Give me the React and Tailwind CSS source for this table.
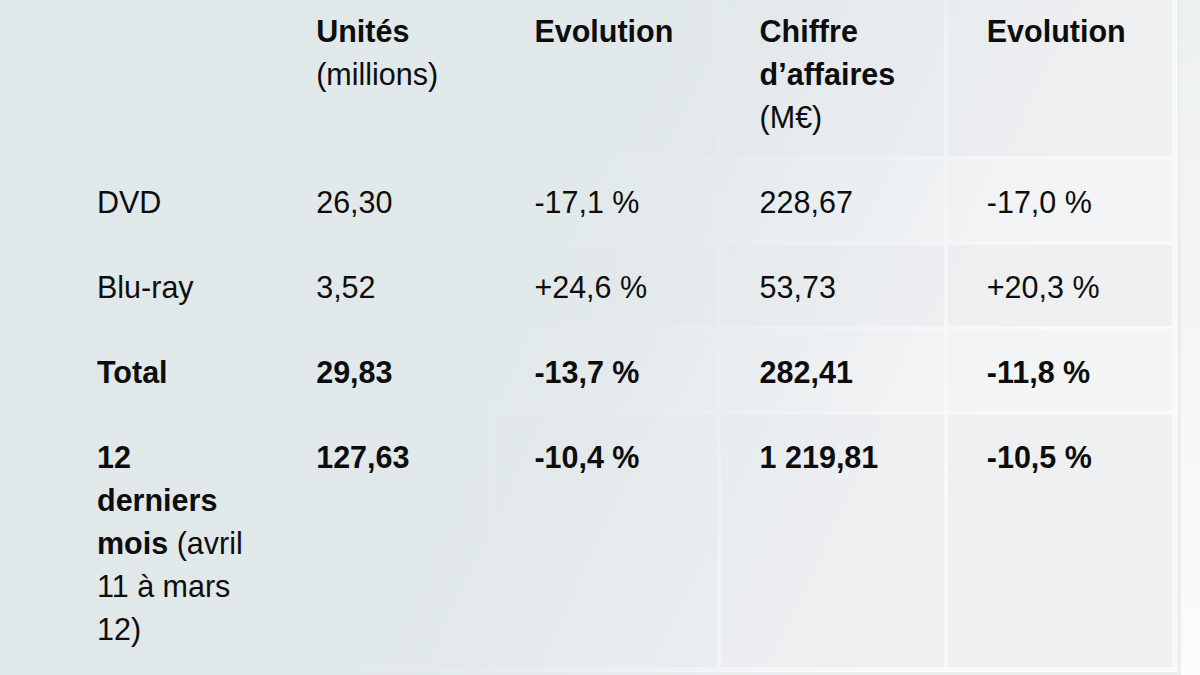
import React from "react";

const rows = [
  { label: "DVD", cells: ["26,30", "-17,1 %", "228,67", "-17,0 %"], bold: false, tone: "light" },
  { label: "Blu-ray", cells: ["3,52", "+24,6 %", "53,73", "+20,3 %"], bold: false, tone: "gray" },
  { label: "Total", cells: ["29,83", "-13,7 %", "282,41", "-11,8 %"], bold: true, tone: "light" },
];

function T({ children, className = "" }) {
  return <span className={"relative z-20 " + className}>{children}</span>;
}

export default function App() {
  const cellBase = "align-top text-left pl-[39px] pr-[10px] pt-[21px] pb-[17px]";
  return (
    <div className="relative w-[1200px] h-[675px] overflow-hidden bg-[linear-gradient(to_bottom,#edf0f1,#fbfcfc)] font-['Liberation_Sans',Arial,sans-serif] text-[30.5px] leading-[43px] text-[#0d0d0d]">
      <div className="ml-[54px] mt-[-4px] inline-block border-r-4 border-b-4 border-[#eceff0]">
        <div className="border-r border-b border-white">
          <table className="w-[1122px] table-fixed border-separate border-spacing-[4px] bg-[#f8f9fa]">
            <colgroup>
              <col className="w-[215px]" />
              <col className="w-[214px]" />
              <col className="w-[221px]" />
              <col className="w-[223px]" />
              <col className="w-[224px]" />
            </colgroup>
            <thead>
              <tr>
                <th className="align-top text-left pl-[39px] pt-[10px] pb-[17px] bg-[#eff0f2] font-normal"></th>
                <th className="align-top text-left pl-[39px] pt-[10px] pb-[17px] bg-[#eff0f2] font-normal">
                  <T className="font-bold">Unités</T>
                  <br />
                  <T>(millions)</T>
                </th>
                <th className="align-top text-left pl-[39px] pt-[10px] pb-[17px] bg-[#eff0f2] font-normal">
                  <T className="font-bold">Evolution</T>
                </th>
                <th className="align-top text-left pl-[39px] pt-[10px] pb-[17px] bg-[#eff0f2] font-normal">
                  <T className="font-bold">Chiffre</T>
                  <br />
                  <T className="font-bold">d’affaires</T>
                  <br />
                  <T>(M€)</T>
                </th>
                <th className="align-top text-left pl-[39px] pt-[10px] pb-[17px] bg-[#eff0f2] font-normal">
                  <T className="font-bold">Evolution</T>
                </th>
              </tr>
            </thead>
            <tbody>
              {rows.map((r) => (
                <tr key={r.label}>
                  <td className={cellBase + (r.tone === "gray" ? " bg-[#eff0f2]" : " bg-[#f4f5f6]")}>
                    <T className={r.bold ? "font-bold whitespace-nowrap" : "whitespace-nowrap"}>{r.label}</T>
                  </td>
                  {r.cells.map((c, i) => (
                    <td key={i} className={cellBase + (r.tone === "gray" ? " bg-[#eff0f2]" : " bg-[#f4f5f6]")}>
                      <T className={r.bold ? "font-bold whitespace-nowrap" : "whitespace-nowrap"}>{c}</T>
                    </td>
                  ))}
                </tr>
              ))}
              <tr>
                <td className="align-top text-left pl-[39px] pr-[10px] pt-[21px] pb-[16px] bg-[#eff0f2]">
                  <T className="font-bold">12</T>
                  <br />
                  <T className="font-bold">derniers</T>
                  <br />
                  <T>
                    <b className="font-bold">mois</b> (avril
                  </T>
                  <br />
                  <T>11 à mars</T>
                  <br />
                  <T>12)</T>
                </td>
                {["127,63", "-10,4 %", "1 219,81", "-10,5 %"].map((c, i) => (
                  <td key={i} className="align-top text-left pl-[39px] pr-[10px] pt-[21px] pb-[16px] bg-[#eff0f2]">
                    <T className="font-bold whitespace-nowrap">{c}</T>
                  </td>
                ))}
              </tr>
            </tbody>
          </table>
        </div>
      </div>
      <div className="pointer-events-none absolute inset-0 z-10 bg-[linear-gradient(115deg,rgba(225,232,234,1)_0%,rgba(225,232,234,0.97)_42%,rgba(225,232,234,0.8)_53%,rgba(225,232,234,0.45)_63%,rgba(225,232,234,0.15)_72%,rgba(225,232,234,0)_82%)]" />
    </div>
  );
}
